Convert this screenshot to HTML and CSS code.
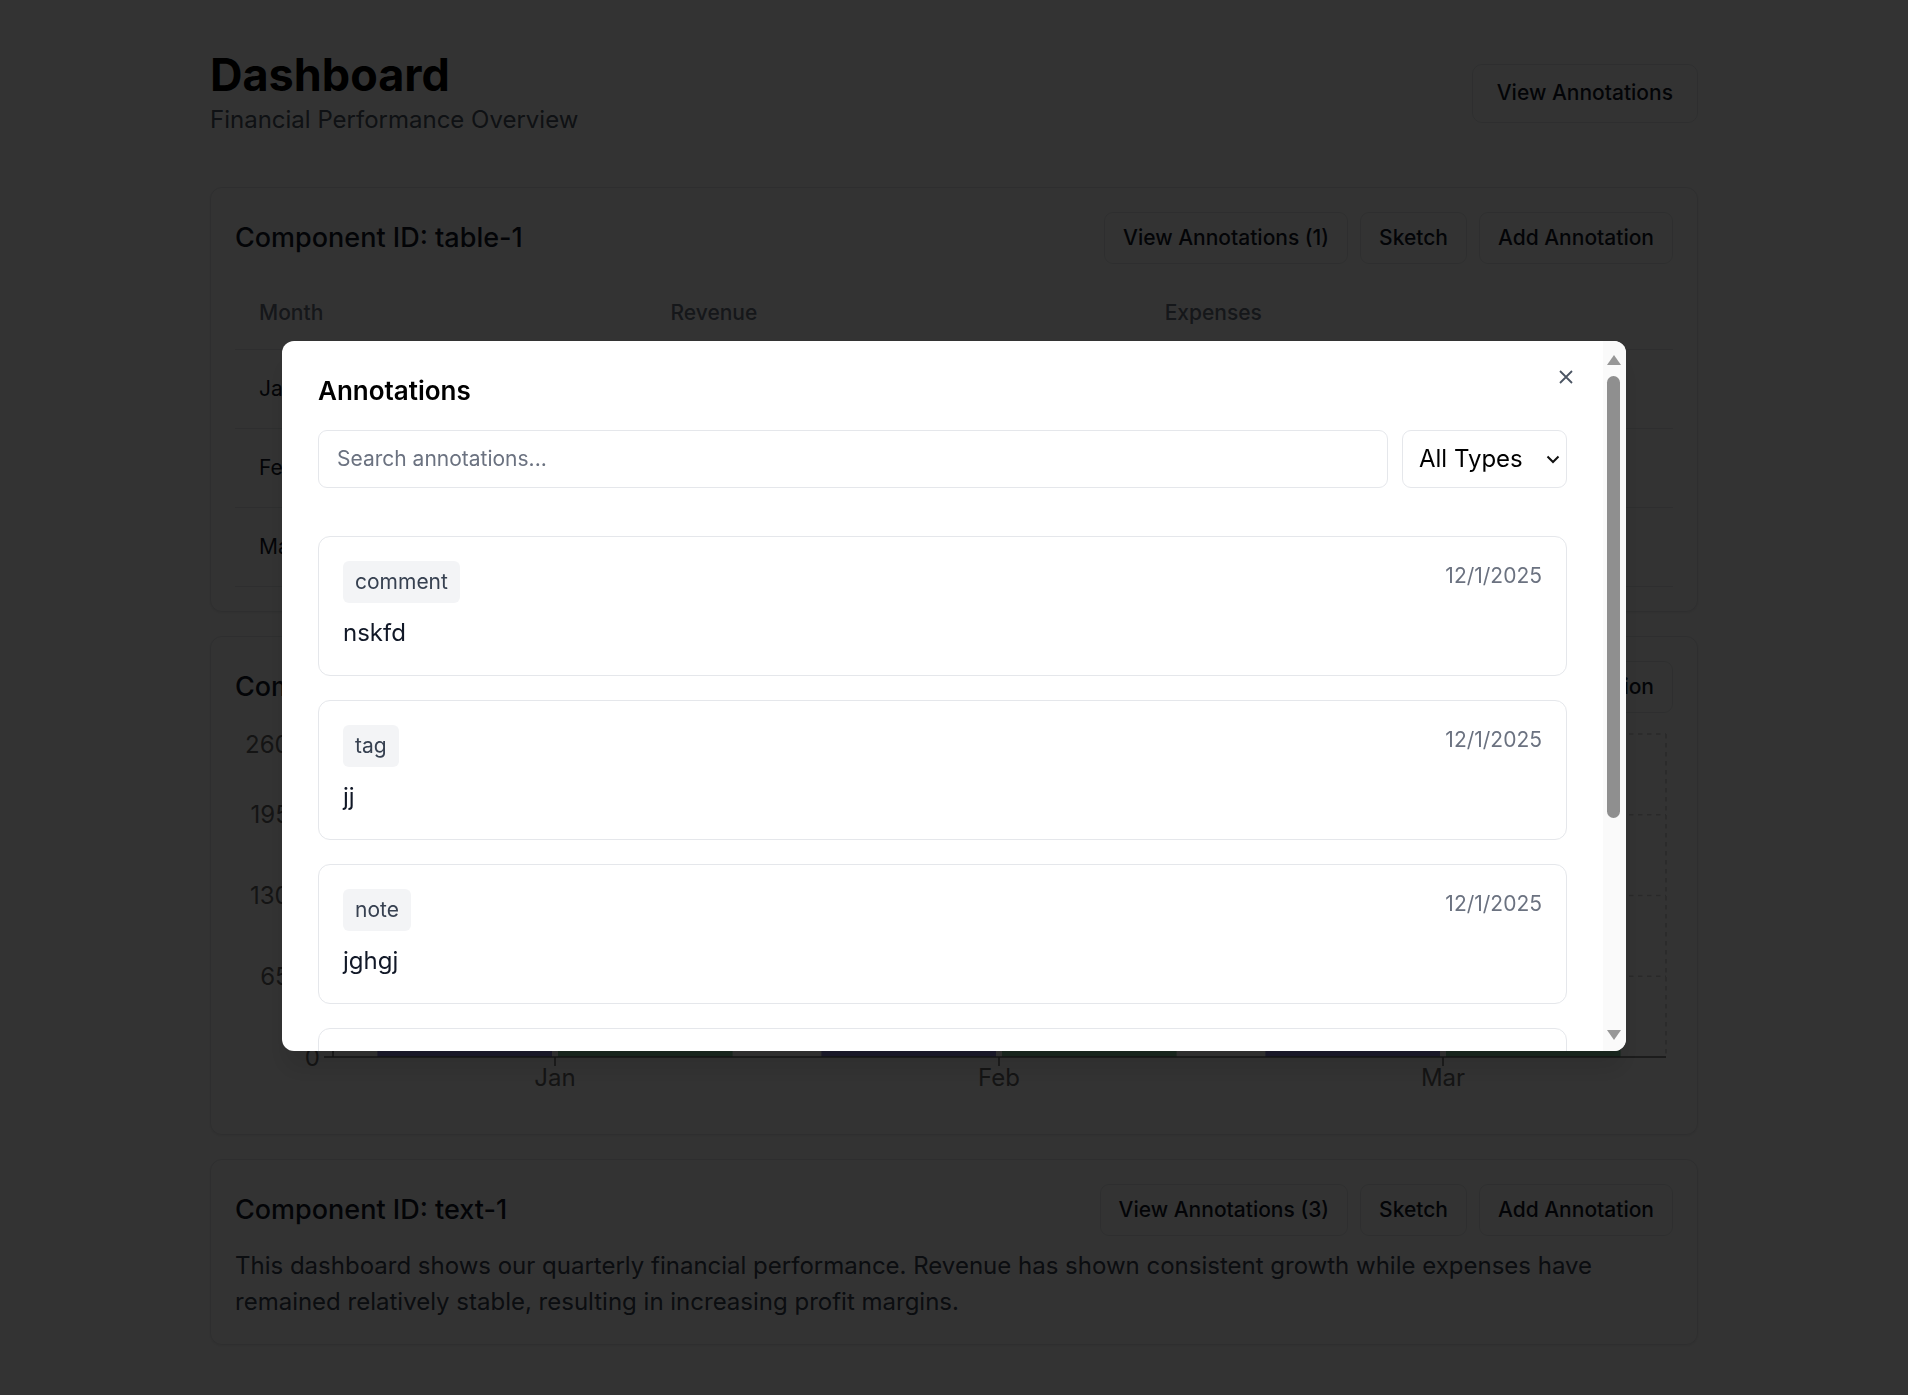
FILE: index.html
```html
<!DOCTYPE html>
<html lang="en">
<head>
<meta charset="utf-8">
<title>Dashboard</title>
<link rel="stylesheet" href="styles.css">
</head>
<body>
<div class="page">
  <header class="top">
    <div class="top-text">
      <h1 class="title">Dashboard</h1>
      <p class="subtitle">Financial Performance Overview</p>
    </div>
    <button class="btn btn-lg">View Annotations</button>
  </header>

  <section class="card">
    <div class="card-head">
      <h2 class="card-title">Component ID: table-1</h2>
      <div class="actions">
        <button class="btn">View Annotations (1)</button>
        <button class="btn">Sketch</button>
        <button class="btn">Add Annotation</button>
      </div>
    </div>
    <table class="data">
      <thead>
        <tr><th>Month</th><th>Revenue</th><th>Expenses</th></tr>
      </thead>
      <tbody>
        <tr><td>Jan</td><td>$12,000</td><td>$8,000</td></tr>
        <tr><td>Feb</td><td>$19,000</td><td>$10,000</td></tr>
        <tr><td>Mar</td><td>$25,000</td><td>$12,000</td></tr>
      </tbody>
    </table>
  </section>

  <section class="card">
    <div class="card-head">
      <h2 class="card-title">Component ID: chart-1</h2>
      <div class="actions">
        <button class="btn">View Annotations (1)</button>
        <button class="btn">Sketch</button>
        <button class="btn">Add Annotation</button>
      </div>
    </div>
    <svg class="chart" width="1438" height="385" viewBox="0 0 1438 385">
      <g class="grid">
        <line x1="98" y1="9" x2="1431" y2="9"/>
        <line x1="98" y1="89.75" x2="1431" y2="89.75"/>
        <line x1="98" y1="170.5" x2="1431" y2="170.5"/>
        <line x1="98" y1="251.25" x2="1431" y2="251.25"/>
        <line x1="98" y1="9" x2="98" y2="332"/>
        <line x1="1431" y1="9" x2="1431" y2="332"/>
      </g>
      <g class="bars-rev">
        <rect x="142.4" y="183" width="174.6" height="149"/>
        <rect x="586.4" y="96" width="174.6" height="236"/>
        <rect x="1030.4" y="21.4" width="174.6" height="310.6"/>
      </g>
      <g class="bars-exp">
        <rect x="323" y="232.6" width="174.6" height="99.4"/>
        <rect x="767" y="207.8" width="174.6" height="124.2"/>
        <rect x="1211" y="183" width="174.6" height="149"/>
      </g>
      <g class="axis">
        <line x1="98" y1="332" x2="1431" y2="332"/>
        <line x1="98" y1="9" x2="98" y2="332"/>
        <line x1="320" y1="332" x2="320" y2="341"/>
        <line x1="764" y1="332" x2="764" y2="341"/>
        <line x1="1208" y1="332" x2="1208" y2="341"/>
        <line x1="89" y1="9" x2="98" y2="9"/>
        <line x1="89" y1="89.75" x2="98" y2="89.75"/>
        <line x1="89" y1="170.5" x2="98" y2="170.5"/>
        <line x1="89" y1="251.25" x2="98" y2="251.25"/>
        <line x1="89" y1="332" x2="98" y2="332"/>
      </g>
      <g class="ticks-y">
        <text x="85" y="27.5">26000</text>
        <text x="85" y="98.25">19500</text>
        <text x="85" y="179">13000</text>
        <text x="85" y="259.75">6500</text>
        <text x="85" y="340.5">0</text>
      </g>
      <g class="ticks-x">
        <text x="320" y="361">Jan</text>
        <text x="764" y="361">Feb</text>
        <text x="1208" y="361">Mar</text>
      </g>
    </svg>
  </section>

  <section class="card">
    <div class="card-head">
      <h2 class="card-title">Component ID: text-1</h2>
      <div class="actions">
        <button class="btn">View Annotations (3)</button>
        <button class="btn">Sketch</button>
        <button class="btn">Add Annotation</button>
      </div>
    </div>
    <p class="body-text">This dashboard shows our quarterly financial performance. Revenue has shown consistent growth while expenses have remained relatively stable, resulting in increasing profit margins.</p>
  </section>
</div>

<div class="overlay">
  <div class="modal">
    <div class="modal-body">
      <button class="close" aria-label="Close">
        <svg width="14" height="14" viewBox="0 0 14 14"><path d="M1 1 L13 13 M13 1 L1 13"/></svg>
      </button>
      <h3 class="modal-title">Annotations</h3>
      <div class="filters">
        <input class="search" type="text" placeholder="Search annotations...">
        <div class="select-wrap">
          <select class="type-select"><option>All Types</option></select>
          <svg class="chev" width="14" height="9" viewBox="0 0 14 9"><path d="M1.5 1.5 L7 7 L12.5 1.5"/></svg>
        </div>
      </div>
      <div class="list">
        <div class="item">
          <div class="item-head"><span class="badge">comment</span><span class="date">12/1/2025</span></div>
          <p class="item-text">nskfd</p>
        </div>
        <div class="item">
          <div class="item-head"><span class="badge">tag</span><span class="date">12/1/2025</span></div>
          <p class="item-text">jj</p>
        </div>
        <div class="item">
          <div class="item-head"><span class="badge">note</span><span class="date">12/1/2025</span></div>
          <p class="item-text">jghgj</p>
        </div>
        <div class="item">
          <div class="item-head"><span class="badge">comment</span><span class="date">12/1/2025</span></div>
          <p class="item-text">test</p>
        </div>
        <div class="item">
          <div class="item-head"><span class="badge">comment</span><span class="date">12/1/2025</span></div>
          <p class="item-text">hello</p>
        </div>
      </div>
    </div>
    <div class="scrollbar" aria-hidden="true">
      <span class="sb-btn sb-up"><span class="tri-up"></span></span>
      <div class="sb-track"><div class="sb-thumb"></div></div>
      <span class="sb-btn sb-down"><span class="tri-down"></span></span>
    </div>
  </div>
</div>
</body>
</html>
```

FILE: styles.css
```css
* { box-sizing: border-box; }

html, body {
  margin: 0;
  padding: 0;
  background: #ffffff;
  font-family: Inter, "Noto Sans", "Liberation Sans", sans-serif;
  color: #111827;
}

.page {
  width: 1488px;
  margin: 0 auto;
  padding: 48px 0;
}

.top {
  display: flex;
  justify-content: space-between;
  align-items: center;
  margin-bottom: 49px;
}

.title {
  margin: 0;
  font-size: 45px;
  line-height: 54px;
  font-weight: 700;
  color: #000;
}

.subtitle {
  margin: 0;
  font-size: 24px;
  line-height: 36px;
  color: #4b5563;
}

.btn {
  font-family: inherit;
  font-size: 21px;
  line-height: 30px;
  font-weight: 500;
  color: #111827;
  background: #ffffff;
  border: 1px solid #e5e7eb;
  border-radius: 9px;
  padding: 10px 18px;
  cursor: pointer;
}

.btn-lg {
  padding: 13.5px 24px;
  border-radius: 10px;
}

.card {
  border: 1px solid #e5e7eb;
  border-radius: 12px;
  padding: 24px;
  margin-bottom: 24px;
  background: #ffffff;
  box-shadow: 0 1px 3px rgba(0, 0, 0, 0.08);
}

.card-head {
  display: flex;
  justify-content: space-between;
  align-items: center;
  margin-bottom: 12px;
}

.card-title {
  margin: 0;
  font-size: 27px;
  line-height: 42px;
  font-weight: 500;
  color: #111827;
}

.actions {
  display: flex;
  gap: 12px;
}

.data {
  width: 100%;
  border-collapse: collapse;
}

.data th {
  text-align: left;
  font-size: 21px;
  line-height: 30px;
  font-weight: 500;
  color: #6b7280;
  padding: 22px 24px 21px;
  border-bottom: 1px solid #e5e7eb;
}

.data td {
  font-size: 21px;
  line-height: 30px;
  color: #111827;
  padding: 24px 24px;
  border-bottom: 1px solid #e5e7eb;
}

.chart {
  display: block;
}

.grid line {
  stroke: #cccccc;
  stroke-width: 1.5;
  stroke-dasharray: 4.5 4.5;
}

.bars-rev rect { fill: #8884d8; }
.bars-exp rect { fill: #82ca9d; }

.axis line {
  stroke: #666666;
  stroke-width: 1.5;
}

.ticks-y text, .ticks-x text {
  font-family: Inter, "Liberation Sans", sans-serif;
  font-size: 24px;
  fill: #666666;
}

.ticks-y text { text-anchor: end; }
.ticks-x text { text-anchor: middle; }

.body-text {
  margin: 0;
  font-size: 24px;
  line-height: 36px;
  color: #374151;
}

/* Modal */
.overlay {
  position: fixed;
  inset: 0;
  background: rgba(0, 0, 0, 0.8);
  display: flex;
  align-items: center;
  justify-content: center;
}

.modal {
  display: flex;
  width: 1344px;
  height: 710px;
  margin-bottom: 4px;
  overflow: hidden;
  background: #ffffff;
  border-radius: 12px;
  box-shadow: 0 20px 25px rgba(0, 0, 0, 0.1);
}

.modal-body {
  position: relative;
  flex: 1;
  min-width: 0;
  overflow: hidden;
  padding: 29px 36px 36px;
}

.scrollbar {
  flex: 0 0 23px;
  display: flex;
  flex-direction: column;
  background: #fafafa;
}

.sb-btn {
  flex: 0 0 35px;
  display: flex;
  justify-content: center;
  padding-top: 14px;
  padding-right: 1px;
}

.tri-up {
  width: 0;
  height: 0;
  border-left: 7px solid transparent;
  border-right: 7px solid transparent;
  border-bottom: 10px solid #979797;
}

.tri-down {
  width: 0;
  height: 0;
  border-left: 7px solid transparent;
  border-right: 7px solid transparent;
  border-top: 10px solid #979797;
}

.sb-track {
  flex: 1;
  padding: 0 6px 0 4px;
}

.sb-thumb {
  height: 442px;
  background: #8f8f8f;
  border-radius: 7px;
}

.close {
  position: absolute;
  top: 29px;
  right: 30px;
  width: 14px;
  height: 14px;
  padding: 0;
  border: 0;
  background: transparent;
  cursor: pointer;
}

.close svg { display: block; }

.close path {
  stroke: #4b5563;
  stroke-width: 1.8;
  fill: none;
}

.modal-title {
  margin: 0 0 18px;
  font-size: 26px;
  line-height: 42px;
  font-weight: 600;
  color: #000;
}

.filters {
  display: flex;
  gap: 14px;
  margin-bottom: 48px;
}

.search {
  flex: 1;
  height: 58px;
  padding: 0 18px;
  border: 1px solid #e5e7eb;
  border-radius: 9px;
  font-family: inherit;
  font-size: 21px;
  color: #111827;
  outline: none;
}

.search::placeholder {
  color: #6b7280;
}

.select-wrap {
  position: relative;
  width: 165px;
}

.type-select {
  appearance: none;
  -webkit-appearance: none;
  width: 100%;
  height: 58px;
  padding: 0 16px;
  border: 1px solid #e5e7eb;
  border-radius: 9px;
  background: #ffffff;
  font-family: inherit;
  font-size: 24px;
  color: #000;
}

.chev {
  position: absolute;
  right: 7px;
  top: 25px;
  pointer-events: none;
}

.chev path {
  stroke: #111;
  stroke-width: 2;
  fill: none;
}

.list {
  display: flex;
  flex-direction: column;
  gap: 24px;
}

.item {
  border: 1px solid #e5e7eb;
  border-radius: 12px;
  padding: 24px;
}

.item-head {
  display: flex;
  justify-content: space-between;
  align-items: flex-start;
  margin-bottom: 12px;
}

.badge {
  background: #f3f4f6;
  color: #374151;
  font-size: 21px;
  line-height: 30px;
  padding: 6px 12px;
  border-radius: 6px;
}

.date {
  font-size: 21px;
  line-height: 30px;
  color: #6b7280;
}

.item-text {
  margin: 0;
  font-size: 24px;
  line-height: 36px;
  color: #111827;
}
```
